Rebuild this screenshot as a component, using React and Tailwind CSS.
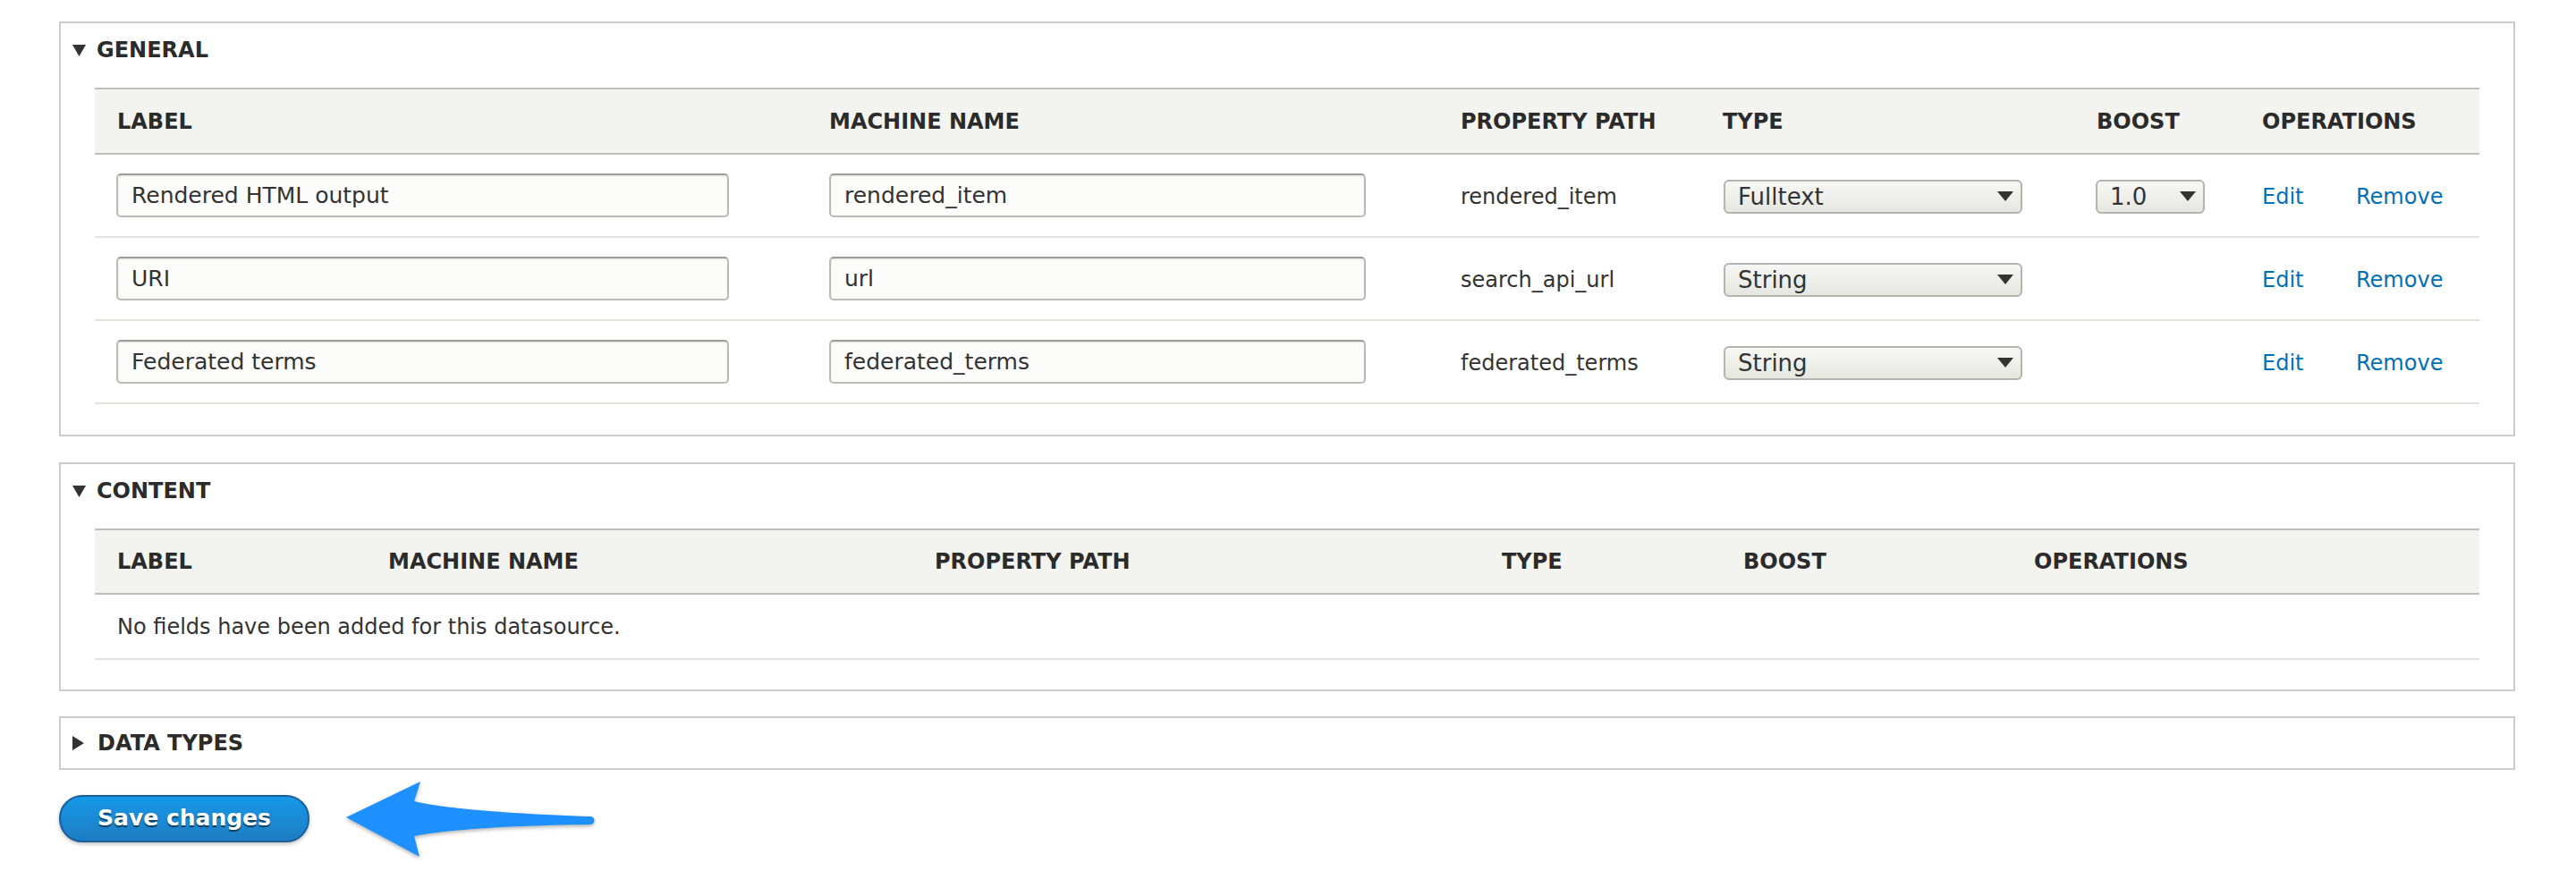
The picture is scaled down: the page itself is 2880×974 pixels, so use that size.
import React from "react";

function Down() {
  return (
    <svg width="15" height="15" viewBox="0 0 15 15" className="shrink-0">
      <polygon points="0,1 15,1 7.5,14" fill="#333" />
    </svg>
  );
}
function Right() {
  return (
    <svg width="15" height="16" viewBox="0 0 15 16" className="shrink-0">
      <polygon points="1,0 14,8 1,16" fill="#333" />
    </svg>
  );
}

function Select({ value, w }) {
  return (
    <div
      className={`${w} h-[38px] flex items-center justify-between border-2 border-[#b4b4ae] rounded-[6px] bg-gradient-to-b from-[#f7f7f5] to-[#e6e6e1] pl-[14px] pr-[8px] text-[26px] text-[#333] leading-none`}
    >
      <span>{value}</span>
      <svg width="18" height="11" viewBox="0 0 18 11">
        <polygon points="0,0 18,0 9,11" fill="#333" />
      </svg>
    </div>
  );
}

function TextInput({ value, w }) {
  return (
    <input
      readOnly
      value={value}
      className={`${w} h-[49px] border-2 border-[#bcbcb6] border-t-[#9d9d98] rounded-[5px] bg-[#fcfcfa] pl-[15px] text-[25px] text-[#333] shadow-[inset_0_1px_2px_rgba(0,0,0,0.12)] outline-none font-['DejaVu_Sans',sans-serif]`}
    />
  );
}

const rows = [
  { label: "Rendered HTML output", machine: "rendered_item", path: "rendered_item", type: "Fulltext", boost: true },
  { label: "URI", machine: "url", path: "search_api_url", type: "String", boost: false },
  { label: "Federated terms", machine: "federated_terms", path: "federated_terms", type: "String", boost: false },
];

function Legend({ children }) {
  return (
    <div className="h-[60px] flex items-center pl-[13px] gap-[12px]">
      <Down />
      <span className="text-[24px] font-bold uppercase text-[#2b2b2b]">{children}</span>
    </div>
  );
}

export default function App() {
  return (
    <div className="min-h-[974px] bg-white pl-[66px] pr-[68px] pt-[24px] text-[#333] font-['DejaVu_Sans',sans-serif]">
      {/* GENERAL */}
      <section className="border-2 border-[#cccccc]">
        <Legend>General</Legend>
        <div className="px-[38px] pt-[12px] pb-[34px]">
          <div className="grid grid-cols-[796px_706px_293px_418px_185px_267px] h-[75px] items-center border-y-2 border-[#bfbfba] bg-[#f3f3ef] text-[24px] font-bold text-[#2b2b2b] uppercase">
            <div className="pl-[25px]">Label</div>
            <div className="pl-[25px]">Machine name</div>
            <div className="pl-[25px]">Property path</div>
            <div className="pl-[25px]">Type</div>
            <div className="pl-[25px]">Boost</div>
            <div className="pl-[25px]">Operations</div>
          </div>
          {rows.map((r) => (
            <div
              key={r.machine}
              className="grid grid-cols-[796px_706px_293px_418px_185px_267px] h-[93px] items-center border-b-2 border-[#e3e3de] text-[24px]"
            >
              <div className="pl-[24px]">
                <TextInput value={r.label} w="w-[685px]" />
              </div>
              <div className="pl-[25px]">
                <TextInput value={r.machine} w="w-[600px]" />
              </div>
              <div className="pl-[25px] pt-[2px] text-[#333]">{r.path}</div>
              <div className="pl-[26px] pt-[2px]">
                <Select value={r.type} w="w-[334px]" />
              </div>
              <div className="pl-[24px] pt-[2px]">
                {r.boost ? <Select value="1.0" w="w-[122px]" /> : null}
              </div>
              <div className="pl-[25px] pt-[2px] flex items-center text-[#0071b8]">
                <a className="w-[105px]">Edit</a>
                <a>Remove</a>
              </div>
            </div>
          ))}
        </div>
      </section>

      {/* CONTENT */}
      <section className="mt-[29px] border-2 border-[#cccccc]">
        <Legend>Content</Legend>
        <div className="px-[38px] pt-[12px] pb-[33px]">
          <div className="grid grid-cols-[303px_611px_634px_270px_325px_522px] h-[74px] items-center border-y-2 border-[#bfbfba] bg-[#f3f3ef] text-[24px] font-bold text-[#2b2b2b] uppercase">
            <div className="pl-[25px]">Label</div>
            <div className="pl-[25px]">Machine name</div>
            <div className="pl-[25px]">Property path</div>
            <div className="pl-[25px]">Type</div>
            <div className="pl-[25px]">Boost</div>
            <div className="pl-[25px]">Operations</div>
          </div>
          <div className="h-[73px] flex items-center border-b-2 border-[#e3e3de] pl-[25px] text-[24px]">
            No fields have been added for this datasource.
          </div>
        </div>
      </section>

      {/* DATA TYPES */}
      <section className="mt-[28px] h-[60px] border-2 border-[#cccccc] flex items-center pl-[12px] gap-[14px]">
        <Right />
        <span className="text-[24px] font-bold uppercase text-[#2b2b2b]">Data types</span>
      </section>

      {/* Actions */}
      <div className="mt-[4px] flex items-center">
        <button className="w-[280px] h-[53px] rounded-[26px] border-2 border-[#1b5e98] bg-gradient-to-b from-[#1598e9] to-[#1d7dc3] text-white text-[25px] font-bold [text-shadow:0_2px_1px_rgba(0,0,0,0.55)] shadow-[0_2px_4px_rgba(0,0,0,0.25)] font-['DejaVu_Sans',sans-serif]">
          Save changes
        </button>
        <svg
          width="290"
          height="100"
          viewBox="0 0 290 100"
          className="ml-[34px] [filter:drop-shadow(0_2px_2px_rgba(0,0,0,0.3))]"
        >
          <path
            d="M7,49 L90,9 L83,31 C120,40 200,45 280,48 A4.5,4.5 0 0 1 280,57 C200,58 120,62 83,70 L89,93 Z"
            fill="#1e90ff"
          />
        </svg>
      </div>
    </div>
  );
}
